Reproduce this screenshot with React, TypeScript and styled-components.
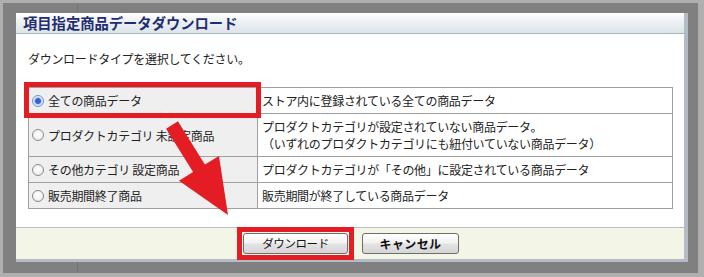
import React from "react";
import styled, { createGlobalStyle } from "styled-components";

const Global = createGlobalStyle`
  html, body { margin: 0; padding: 0; background: #afafaf; }
  * { box-sizing: border-box; }
`;

const Frame = styled.div`
  position: relative;
  width: 704px;
  height: 277px;
  border-style: solid;
  border-color: #afafaf;
  border-width: 3px 6px 4px 3px;
  background-color: #808080;
  background-image: linear-gradient(to right, transparent 74px, #747474 74px, #747474 75px, transparent 75px);
  padding: 10px 10px 11px 13px;
  font-family: "Noto Sans CJK JP", "Noto Sans", sans-serif;
`;

const Dialog = styled.div`
  width: 672px;
  height: 249px;
  background: #ffffff;
  border-right: 4px solid #b3bcc4;
  border-bottom: 3px solid #b3bcc4;
  display: flex;
  flex-direction: column;
`;

const TitleBar = styled.div`
  height: 21px;
  padding: 0 0 0 7px;
  background: linear-gradient(to bottom, #ffffff 0%, #eef2f4 40%, #dde4e8 100%);
  border-bottom: 1px solid #aab4bc;
  color: #1f2c70;
  font-weight: 700;
  font-size: 14.3px;
  line-height: 20px;
  white-space: nowrap;
`;

const Body = styled.div`
  padding: 16px 11px 18px 12px;
`;

const Intro = styled.div`
  font-size: 12px;
  line-height: 17px;
  letter-spacing: -0.3px;
  color: #222;
  margin-bottom: 20px;
  white-space: nowrap;
`;

const Table = styled.table`
  width: 645px;
  border-collapse: collapse;
  table-layout: fixed;
  font-size: 12px;
  line-height: 17px;
  letter-spacing: -0.3px;
  color: #222;
`;

const Cell = styled.td<{ $label?: boolean }>`
  border: 1px solid #a0a0a0;
  padding: 4px 4px 4px ${(p) => (p.$label ? "3px" : "4px")};
  background: ${(p) => (p.$label ? "#efefef" : "#ffffff")};
  vertical-align: middle;
  white-space: nowrap;
  position: relative;
`;

const Label = styled.label`
  display: flex;
  align-items: center;
  gap: 4px;
`;

const Radio = styled.input`
  appearance: none;
  -webkit-appearance: none;
  margin: 0;
  width: 12px;
  height: 12px;
  border-radius: 50%;
  border: 1px solid #8a8a8a;
  background: radial-gradient(circle at 50% 40%, #ffffff 0%, #f2f2f2 60%, #dcdcdc 100%);
  flex: none;
  &:checked {
    border-color: #6f8fd6;
    background: radial-gradient(circle, #2a5ad8 0%, #3a68e0 38%, #b9cbf3 46%, #eef3fd 70%, #dde6f8 100%);
  }
`;

const Highlight = styled.span<{ $t: number; $r: number; $b: number; $l: number }>`
  position: absolute;
  top: ${(p) => p.$t}px;
  right: ${(p) => p.$r}px;
  bottom: ${(p) => p.$b}px;
  left: ${(p) => p.$l}px;
  border: 5px solid #e31d23;
  pointer-events: none;
  z-index: 2;
`;

const Footer = styled.div`
  flex: 1;
  border-top: 1px solid #b8bec4;
  background: #f3f5e7;
  display: flex;
  align-items: center;
  justify-content: center;
  gap: 14px;
  padding-left: 2px;
`;

const ButtonWrap = styled.span`
  position: relative;
  display: inline-flex;
`;

const Button = styled.button<{ $bold?: boolean; $w: number }>`
  width: ${(p) => p.$w}px;
  height: 21px;
  margin: 0;
  padding: 0;
  border: 1px solid #6e6e6e;
  border-radius: 3px;
  background: linear-gradient(to bottom, #ffffff 0%, #f3f3f3 45%, #e2e2e2 55%, #d6d6d6 100%);
  font-family: "Noto Sans CJK JP", "Noto Sans", sans-serif;
  font-size: ${(p) => (p.$bold ? "12px" : "11.5px")};
  font-weight: ${(p) => (p.$bold ? 700 : 400)};
  letter-spacing: ${(p) => (p.$bold ? "0.4px" : "-0.4px")};
  color: #111;
  line-height: 19px;
`;

const ArrowLayer = styled.svg`
  position: absolute;
  left: -3px;
  top: -3px;
  width: 704px;
  height: 277px;
  pointer-events: none;
  z-index: 3;
`;

type Row = { label: string; desc: string[]; checked?: boolean };

const rows: Row[] = [
  { label: "全ての商品データ", desc: ["ストア内に登録されている全ての商品データ"], checked: true },
  {
    label: "プロダクトカテゴリ 未設定商品",
    desc: ["プロダクトカテゴリが設定されていない商品データ。", "（いずれのプロダクトカテゴリにも紐付いていない商品データ）"],
  },
  { label: "その他カテゴリ 設定商品", desc: ["プロダクトカテゴリが「その他」に設定されている商品データ"] },
  { label: "販売期間終了商品", desc: ["販売期間が終了している商品データ"] },
];

export default function App() {
  return (
    <>
      <Global />
      <Frame>
        <Dialog>
          <TitleBar>項目指定商品データダウンロード</TitleBar>
          <Body>
            <Intro>ダウンロードタイプを選択してください。</Intro>
            <Table>
              <colgroup>
                <col style={{ width: 229 }} />
                <col />
              </colgroup>
              <tbody>
                {rows.map((r, i) => (
                  <tr key={i}>
                    <Cell $label>
                      <Label>
                        <Radio type="radio" name="type" defaultChecked={r.checked} />
                        <span>{r.label}</span>
                      </Label>
                      {i === 0 && <Highlight $t={-6} $r={-4} $b={-5} $l={-5} />}
                    </Cell>
                    <Cell>
                      {r.desc.map((d, j) => (
                        <div key={j}>{d}</div>
                      ))}
                    </Cell>
                  </tr>
                ))}
              </tbody>
            </Table>
          </Body>
          <Footer>
            <ButtonWrap>
              <Button $w={105}>ダウンロード</Button>
              <Highlight $t={-6} $r={-6} $b={-6} $l={-6} />
            </ButtonWrap>
            <ButtonWrap>
              <Button $bold $w={97}>キャンセル</Button>
            </ButtonWrap>
          </Footer>
        </Dialog>
        <ArrowLayer viewBox="0 0 704 277">
          <polygon
            fill="#e31d23"
            points="177.9,121.3 204.9,164.6 219,155.9 228,215 179,180.7 193.1,172 166.1,128.7"
          />
        </ArrowLayer>
      </Frame>
    </>
  );
}
